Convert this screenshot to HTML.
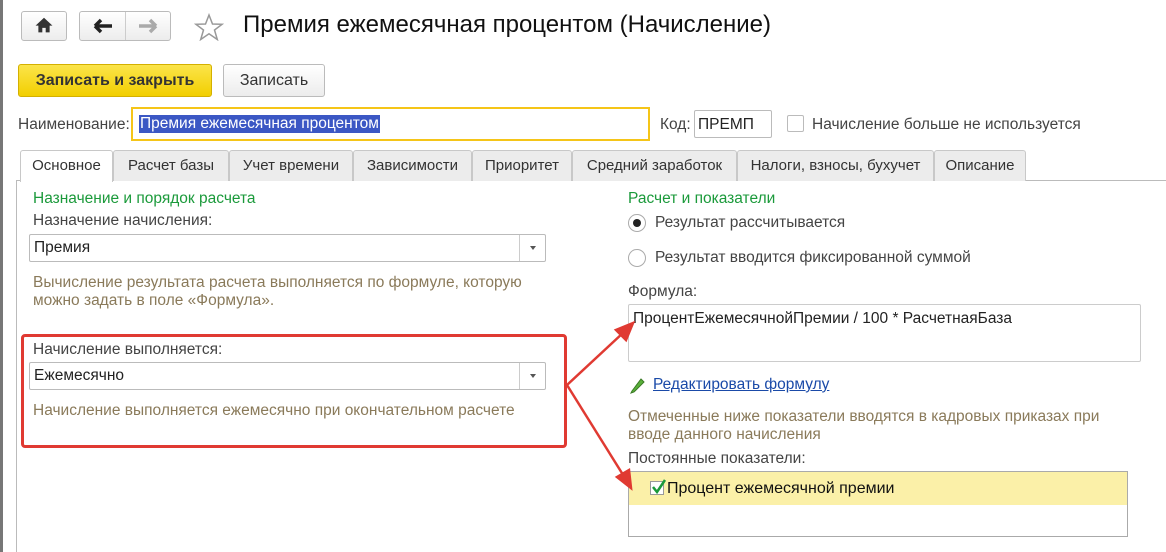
<!DOCTYPE html>
<html><head><meta charset="utf-8"><style>
*{box-sizing:border-box;margin:0;padding:0}
body{width:1166px;height:552px;background:#fff;font-family:"Liberation Sans",sans-serif;font-size:15px;color:#333;position:relative;overflow:hidden}
.a{position:absolute;white-space:nowrap}
.btn{position:absolute;border:1px solid #bbb;border-radius:3px;background:linear-gradient(#fff,#ececec)}
.tab{position:absolute;top:150px;height:31px;border:1px solid #c8c8c8;border-bottom:none;background:#ececec;border-radius:3px 3px 0 0;text-align:center;line-height:29px;font-size:15px;color:#333}
.inp{position:absolute;border:1px solid #bbb;border-radius:2px;background:#fff}
.grn{color:#1b9a3b}
.hint{color:#8a7a5a;font-size:15.5px}
.dd{position:absolute;right:0;top:0;width:26px;height:100%;border-left:1px solid #ccc}
.dd:after{content:"";position:absolute;left:10px;top:11px;border:3px solid transparent;border-top:4px solid #555}
</style></head><body>
<div class="a" style="left:0;top:0;width:3px;height:552px;background:#777"></div>
<div class="btn" style="left:21px;top:11px;width:46px;height:30px"></div>
<svg class="a" style="left:35px;top:16px" width="18" height="18" viewBox="0 0 16 16"><path d="M8 1.5 L0.5 8.5 H3 V14.5 H6.5 V10.5 H9.5 V14.5 H13 V8.5 H15.5 Z" fill="#333"/></svg>
<div class="btn" style="left:79px;top:11px;width:92px;height:30px"></div>
<div class="a" style="left:125px;top:12px;width:1px;height:28px;background:#ccc"></div>
<svg class="a" style="left:93px;top:18px" width="20" height="16"><path d="M2 8 H19 M2 8 L8 2 M2 8 L8 14" stroke="#222" stroke-width="3.5" fill="none"/></svg>
<svg class="a" style="left:138px;top:18px" width="20" height="16"><path d="M1 8 H18 M18 8 L12 2 M18 8 L12 14" stroke="#aaa" stroke-width="3.5" fill="none"/></svg>
<svg class="a" style="left:194px;top:13px" width="30" height="28"><path d="M15 2 L18.5 11 L28 11.3 L20.5 17 L23.3 26.5 L15 20.8 L6.7 26.5 L9.5 17 L2 11.3 L11.5 11 Z" fill="none" stroke="#999" stroke-width="1.5"/></svg>
<div class="a" style="left:243px;top:11px;font-size:24px;color:#111">Премия ежемесячная процентом (Начисление)</div>
<div class="a" style="left:18px;top:64px;width:194px;height:33px;border:1px solid #d4b000;border-radius:3px;background:linear-gradient(#fbe44a,#f2cf00);font-weight:bold;text-align:center;line-height:31px;color:#333;font-size:16px">Записать и закрыть</div>
<div class="btn" style="left:223px;top:64px;width:102px;height:33px;text-align:center;line-height:31px;font-size:16px">Записать</div>
<div class="a" style="left:18px;top:116px;color:#444;font-size:15.5px">Наименование:</div>
<div class="a" style="left:131px;top:107px;width:519px;height:34px;border:2px solid #f5c518"></div>
<div class="a" style="left:139px;top:115px;background:#3b57c4;color:#fff;padding:0 1px;line-height:18px;font-size:15.5px">Премия ежемесячная процентом</div>
<div class="a" style="left:660px;top:116px;color:#444;font-size:15.5px">Код:</div>
<div class="inp" style="left:694px;top:110px;width:78px;height:28px;padding:5px 3px;color:#222;font-size:15.5px">ПРЕМП</div>
<div class="a" style="left:787px;top:115px;width:17px;height:17px;border:1px solid #bbb;border-radius:2px"></div>
<div class="a" style="left:812px;top:116px;color:#444;font-size:15.5px">Начисление больше не используется</div>
<div class="a" style="left:16px;top:180px;width:1150px;height:1px;background:#bbb"></div>
<div class="a" style="left:16px;top:180px;width:1px;height:372px;background:#bbb"></div>
<div class="tab" style="left:20px;width:93px;background:#fff;height:32px">Основное</div>
<div class="tab" style="left:113px;width:116px">Расчет базы</div>
<div class="tab" style="left:229px;width:124px">Учет времени</div>
<div class="tab" style="left:353px;width:119px">Зависимости</div>
<div class="tab" style="left:472px;width:100px">Приоритет</div>
<div class="tab" style="left:572px;width:165px">Средний заработок</div>
<div class="tab" style="left:737px;width:197px">Налоги, взносы, бухучет</div>
<div class="tab" style="left:934px;width:92px">Описание</div>
<div class="a grn" style="left:33px;top:190px;font-size:15.5px">Назначение и порядок расчета</div>
<div class="a" style="left:33px;top:212px;color:#444;font-size:15.5px">Назначение начисления:</div>
<div class="inp" style="left:29px;top:234px;width:517px;height:28px;padding:4px 4px;color:#222;font-size:15.5px">Премия<div class="dd"></div></div>
<div class="a hint" style="left:33px;top:274px;line-height:18px">Вычисление результата расчета выполняется по формуле, которую<br>можно задать в поле «Формула».</div>
<div class="a" style="left:21px;top:334px;width:546px;height:114px;border:3px solid #e03a32;border-radius:4px"></div>
<div class="a" style="left:33px;top:341px;color:#444;font-size:15.5px">Начисление выполняется:</div>
<div class="inp" style="left:29px;top:362px;width:517px;height:28px;padding:4px 4px;color:#222;font-size:15.5px">Ежемесячно<div class="dd"></div></div>
<div class="a hint" style="left:33px;top:402px">Начисление выполняется ежемесячно при окончательном расчете</div>
<div class="a grn" style="left:628px;top:190px;font-size:15.5px">Расчет и показатели</div>
<div class="a" style="left:628px;top:214px;width:18px;height:18px;border:1px solid #aaa;border-radius:50%;background:#fff"></div>
<div class="a" style="left:633px;top:219px;width:8px;height:8px;border-radius:50%;background:#222"></div>
<div class="a" style="left:655px;top:214px;color:#444;font-size:15.5px">Результат рассчитывается</div>
<div class="a" style="left:628px;top:249px;width:18px;height:18px;border:1px solid #aaa;border-radius:50%"></div>
<div class="a" style="left:655px;top:249px;color:#444;font-size:15.5px">Результат вводится фиксированной суммой</div>
<div class="a" style="left:628px;top:283px;color:#444;font-size:15.5px">Формула:</div>
<div class="inp" style="left:628px;top:304px;width:513px;height:58px;border-color:#ccc;padding:5px 4px;color:#222;font-size:15.5px">ПроцентЕжемесячнойПремии / 100 * РасчетнаяБаза</div>
<svg class="a" style="left:629px;top:377px" width="17" height="17"><path d="M3 14 L2 16 L5 15 L15 5 L12 2 Z" fill="#5ab03a" stroke="#3a7a25"/></svg>
<div class="a" style="left:653px;top:376px;color:#1a4aa8;text-decoration:underline;font-size:15.5px">Редактировать формулу</div>
<div class="a hint" style="left:628px;top:408px;line-height:18px">Отмеченные ниже показатели вводятся в кадровых приказах при<br>вводе данного начисления</div>
<div class="a" style="left:628px;top:450px;color:#444;font-size:15.5px">Постоянные показатели:</div>
<div class="a" style="left:628px;top:471px;width:500px;height:66px;border:1px solid #aaa;background:#fff"></div>
<div class="a" style="left:629px;top:472px;width:498px;height:33px;background:#fbf0a8"></div>
<div class="a" style="left:650px;top:481px;width:14px;height:14px;border:1px solid #999;background:#fff"></div>
<svg class="a" style="left:650px;top:478px" width="18" height="18"><path d="M3 9 L7 14 L15 2" stroke="#1a9a3a" stroke-width="2.5" fill="none"/></svg>
<div class="a" style="left:667px;top:480px;color:#111;font-size:16px">Процент ежемесячной премии</div>
<svg class="a" style="left:0;top:0" width="1166" height="552"><g stroke="#e03a32" stroke-width="2.5" fill="#e03a32"><path d="M567 385 L624 332" fill="none"/><path d="M633 323 L616 330 L626 340 Z"/><path d="M567 385 L625 478" fill="none"/><path d="M631 488 L617 477 L629 470 Z"/></g></svg>
</body></html>
